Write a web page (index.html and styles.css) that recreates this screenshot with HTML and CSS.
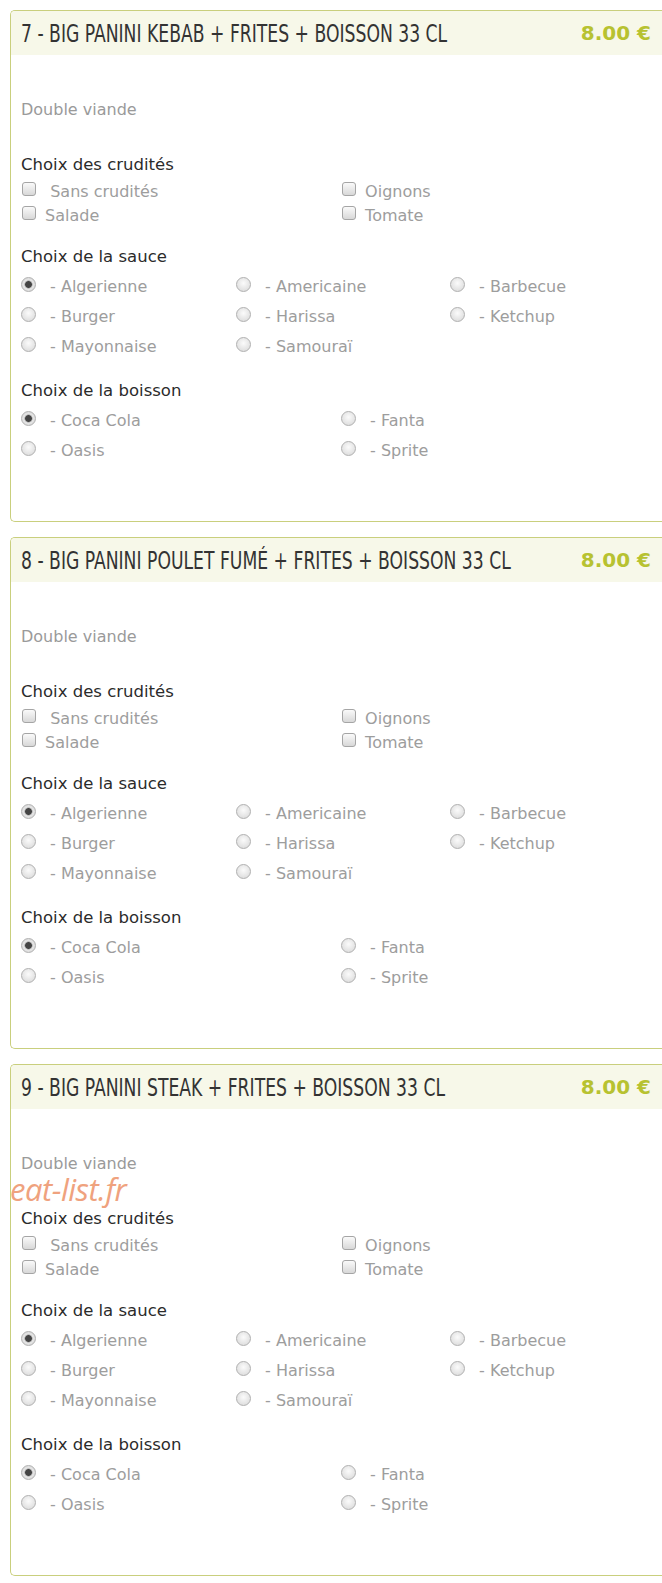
FILE: index.html
```html
<!DOCTYPE html>
<html lang="fr">
<head>
<meta charset="utf-8">
<title>Menu</title>
<link rel="stylesheet" href="styles.css">
</head>
<body>
<div class="list">

<section class="card">
  <header class="card-head"><h2 class="title">7 - BIG PANINI KEBAB + FRITES + BOISSON 33 CL</h2><span class="price">8.00 €</span></header>
  <div class="card-body">
    <p class="desc">Double viande</p>
    <h3 class="group-title">Choix des crudités</h3>
    <div class="grid two checks">
      <label class="opt"><input type="checkbox" class="cb"> &nbsp;Sans crudités</label>
      <label class="opt"><input type="checkbox" class="cb"> Oignons</label>
      <label class="opt"><input type="checkbox" class="cb"> Salade</label>
      <label class="opt"><input type="checkbox" class="cb"> Tomate</label>
    </div>
    <h3 class="group-title sec">Choix de la sauce</h3>
    <div class="grid three radios">
      <label class="opt"><input type="radio" name="s7" class="rb" checked> - Algerienne</label>
      <label class="opt"><input type="radio" name="s7" class="rb"> - Americaine</label>
      <label class="opt"><input type="radio" name="s7" class="rb"> - Barbecue</label>
      <label class="opt"><input type="radio" name="s7" class="rb"> - Burger</label>
      <label class="opt"><input type="radio" name="s7" class="rb"> - Harissa</label>
      <label class="opt"><input type="radio" name="s7" class="rb"> - Ketchup</label>
      <label class="opt"><input type="radio" name="s7" class="rb"> - Mayonnaise</label>
      <label class="opt"><input type="radio" name="s7" class="rb"> - Samouraï</label>
    </div>
    <h3 class="group-title sec">Choix de la boisson</h3>
    <div class="grid two radios">
      <label class="opt"><input type="radio" name="b7" class="rb" checked> - Coca Cola</label>
      <label class="opt"><input type="radio" name="b7" class="rb"> - Fanta</label>
      <label class="opt"><input type="radio" name="b7" class="rb"> - Oasis</label>
      <label class="opt"><input type="radio" name="b7" class="rb"> - Sprite</label>
    </div>
  </div>
</section>

<section class="card">
  <header class="card-head"><h2 class="title">8 - BIG PANINI POULET FUMÉ + FRITES + BOISSON 33 CL</h2><span class="price">8.00 €</span></header>
  <div class="card-body">
    <p class="desc">Double viande</p>
    <h3 class="group-title">Choix des crudités</h3>
    <div class="grid two checks">
      <label class="opt"><input type="checkbox" class="cb"> &nbsp;Sans crudités</label>
      <label class="opt"><input type="checkbox" class="cb"> Oignons</label>
      <label class="opt"><input type="checkbox" class="cb"> Salade</label>
      <label class="opt"><input type="checkbox" class="cb"> Tomate</label>
    </div>
    <h3 class="group-title sec">Choix de la sauce</h3>
    <div class="grid three radios">
      <label class="opt"><input type="radio" name="s8" class="rb" checked> - Algerienne</label>
      <label class="opt"><input type="radio" name="s8" class="rb"> - Americaine</label>
      <label class="opt"><input type="radio" name="s8" class="rb"> - Barbecue</label>
      <label class="opt"><input type="radio" name="s8" class="rb"> - Burger</label>
      <label class="opt"><input type="radio" name="s8" class="rb"> - Harissa</label>
      <label class="opt"><input type="radio" name="s8" class="rb"> - Ketchup</label>
      <label class="opt"><input type="radio" name="s8" class="rb"> - Mayonnaise</label>
      <label class="opt"><input type="radio" name="s8" class="rb"> - Samouraï</label>
    </div>
    <h3 class="group-title sec">Choix de la boisson</h3>
    <div class="grid two radios">
      <label class="opt"><input type="radio" name="b8" class="rb" checked> - Coca Cola</label>
      <label class="opt"><input type="radio" name="b8" class="rb"> - Fanta</label>
      <label class="opt"><input type="radio" name="b8" class="rb"> - Oasis</label>
      <label class="opt"><input type="radio" name="b8" class="rb"> - Sprite</label>
    </div>
  </div>
</section>

<section class="card">
  <header class="card-head"><h2 class="title">9 - BIG PANINI STEAK + FRITES + BOISSON 33 CL</h2><span class="price">8.00 €</span></header>
  <div class="card-body">
    <p class="desc">Double viande</p>
    <h3 class="group-title">Choix des crudités</h3>
    <div class="grid two checks">
      <label class="opt"><input type="checkbox" class="cb"> &nbsp;Sans crudités</label>
      <label class="opt"><input type="checkbox" class="cb"> Oignons</label>
      <label class="opt"><input type="checkbox" class="cb"> Salade</label>
      <label class="opt"><input type="checkbox" class="cb"> Tomate</label>
    </div>
    <h3 class="group-title sec">Choix de la sauce</h3>
    <div class="grid three radios">
      <label class="opt"><input type="radio" name="s9" class="rb" checked> - Algerienne</label>
      <label class="opt"><input type="radio" name="s9" class="rb"> - Americaine</label>
      <label class="opt"><input type="radio" name="s9" class="rb"> - Barbecue</label>
      <label class="opt"><input type="radio" name="s9" class="rb"> - Burger</label>
      <label class="opt"><input type="radio" name="s9" class="rb"> - Harissa</label>
      <label class="opt"><input type="radio" name="s9" class="rb"> - Ketchup</label>
      <label class="opt"><input type="radio" name="s9" class="rb"> - Mayonnaise</label>
      <label class="opt"><input type="radio" name="s9" class="rb"> - Samouraï</label>
    </div>
    <h3 class="group-title sec">Choix de la boisson</h3>
    <div class="grid two radios">
      <label class="opt"><input type="radio" name="b9" class="rb" checked> - Coca Cola</label>
      <label class="opt"><input type="radio" name="b9" class="rb"> - Fanta</label>
      <label class="opt"><input type="radio" name="b9" class="rb"> - Oasis</label>
      <label class="opt"><input type="radio" name="b9" class="rb"> - Sprite</label>
    </div>
  </div>
  <span class="watermark">eat-list.fr</span>
</section>

</div>
</body>
</html>
```
FILE: styles.css
```css
html, body {
  margin: 0;
  padding: 0;
  background: #ffffff;
  overflow: hidden;
}
body {
  font-family: "DejaVu Sans", Verdana, sans-serif;
}
.list {
  padding: 10px 0 0 10px;
}
.card {
  position: relative;
  box-sizing: border-box;
  width: 652px;
  height: 512px;
  margin-bottom: 15px;
  border: 1px solid #c9cf7d;
  border-right: none;
  border-radius: 5px 0 0 5px;
}
.card:last-child {
  margin-bottom: 0;
}
.card-head {
  height: 44px;
  background: #f7f8e9;
  display: flex;
  align-items: center;
  justify-content: space-between;
  padding: 0 11px 0 10px;
  border-radius: 4px 0 0 0;
}
.title {
  flex: 1 1 auto;
  min-width: 0;
  margin: 0;
  font-family: "DejaVu Sans", sans-serif;
  font-stretch: condensed;
  font-weight: normal;
  font-size: 25px;
  color: #333333;
  white-space: nowrap;
  transform: scaleX(0.765);
  transform-origin: left center;
}
.price {
  flex: 0 0 auto;
  white-space: nowrap;
  font-family: "DejaVu Sans", sans-serif;
  font-weight: bold;
  font-size: 20px;
  color: #b7c231;
}
.card-body {
  padding-left: 10px;
}
.desc {
  margin: 45px 0 0;
  font-size: 16px;
  line-height: 20px;
  color: #9a9a9a;
}
.group-title {
  margin: 34px 0 3px;
  font-size: 16.5px;
  line-height: 22px;
  font-weight: normal;
  color: #2b2b2b;
}
.group-title.sec {
  margin-top: 19px;
}
.grid {
  display: grid;
  width: 640px;
}
.grid.two {
  grid-template-columns: 320px 320px;
}
.grid.three {
  grid-template-columns: 215px 214px 211px;
}
.opt {
  display: flex;
  align-items: center;
  font-size: 16px;
  color: #9d9d9d;
  white-space: pre;
}
.checks .opt {
  height: 24px;
}
.radios .opt {
  height: 30px;
}
.cb {
  appearance: none;
  -webkit-appearance: none;
  box-sizing: border-box;
  width: 14px;
  height: 14px;
  margin: 0 4px 4px 1px;
  border: 1px solid #a5a5a5;
  border-radius: 3px;
  background: linear-gradient(#fafafa, #d8d8d8);
}
.rb {
  appearance: none;
  -webkit-appearance: none;
  box-sizing: border-box;
  width: 15px;
  height: 15px;
  margin: 0 9px 4px 0;
  border: 1px solid #b0b0b0;
  border-radius: 50%;
  background: radial-gradient(circle at 50% 40%, #fbfbfb, #d6d6d6);
}
.rb:checked {
  background: radial-gradient(circle, #444 0 3px, #9a9a9a 3.5px, #e6e6e6 4.5px, #d0d0d0 100%);
}
.watermark {
  position: absolute;
  left: -1px;
  top: 109px;
  line-height: 31px;
  font-family: "Open Sans", sans-serif;
  font-style: italic;
  font-size: 31px;
  color: #efa27e;
  letter-spacing: -0.5px;
}
```
